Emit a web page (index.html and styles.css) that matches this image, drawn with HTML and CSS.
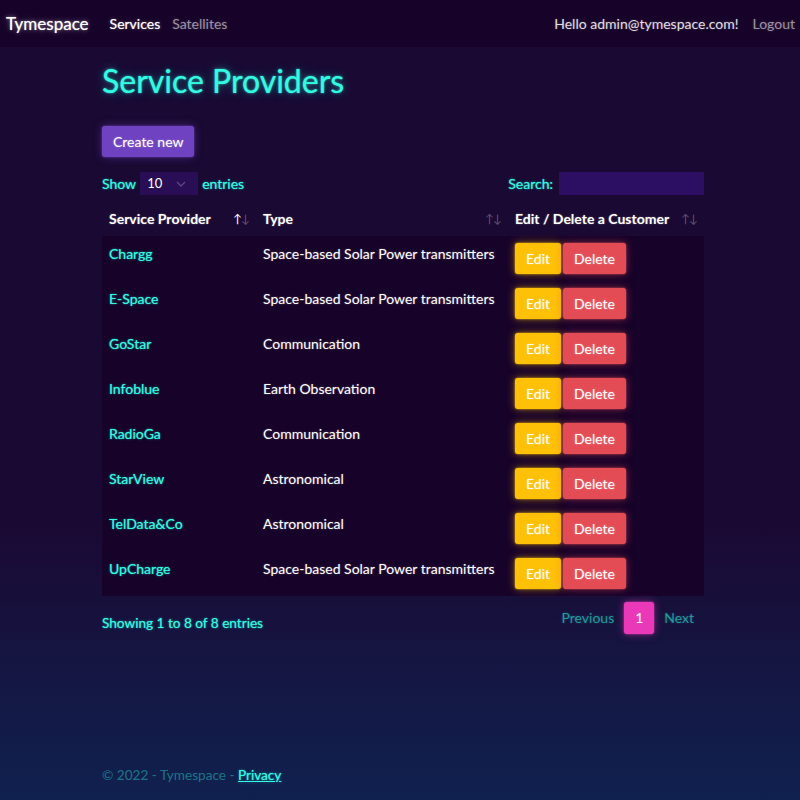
FILE: index.html
```html
<!DOCTYPE html>
<html lang="en">
<head>
<meta charset="utf-8">
<title>Service Providers - Tymespace</title>
<link rel="stylesheet" href="styles.css">
</head>
<body>
<header class="navbar">
  <div class="nav-left">
    <a class="brand" href="#">Tymespace</a>
    <a class="nav-link active" href="#">Services</a>
    <a class="nav-link" href="#">Satellites</a>
  </div>
  <div class="nav-right">
    <span class="hello">Hello admin@tymespace.com!</span>
    <a class="nav-link logout" href="#">Logout</a>
  </div>
</header>

<main class="container">
  <h1 class="title">Service Providers</h1>
  <div class="actions">
    <a class="btn btn-primary" href="#">Create new</a>
  </div>

  <div class="dt-top">
    <label class="dt-length">Show
      <span class="select"><span>10</span>
        <svg width="10" height="6" viewBox="0 0 10 6"><path d="M1 1l4 4 4-4" fill="none" stroke="#5a4a7e" stroke-width="1.3"/></svg>
      </span>
      entries</label>
    <label class="dt-search">Search: <span class="search-input"></span></label>
  </div>

  <table class="table">
    <thead>
      <tr>
        <th class="c1"><div class="th-in"><span>Service Provider</span><span class="sort"><span class="on">↑</span><span>↓</span></span></div></th>
        <th class="c2"><div class="th-in"><span>Type</span><span class="sort"><span>↑</span><span>↓</span></span></div></th>
        <th class="c3"><div class="th-in"><span>Edit / Delete a Customer</span><span class="sort"><span>↑</span><span>↓</span></span></div></th>
      </tr>
    </thead>
    <tbody>
      <tr><td class="name">Chargg</td><td class="type">Space-based Solar Power transmitters</td><td class="ops"><a class="btn btn-warning" href="#">Edit</a><a class="btn btn-danger" href="#">Delete</a></td></tr>
      <tr><td class="name">E-Space</td><td class="type">Space-based Solar Power transmitters</td><td class="ops"><a class="btn btn-warning" href="#">Edit</a><a class="btn btn-danger" href="#">Delete</a></td></tr>
      <tr><td class="name">GoStar</td><td class="type">Communication</td><td class="ops"><a class="btn btn-warning" href="#">Edit</a><a class="btn btn-danger" href="#">Delete</a></td></tr>
      <tr><td class="name">Infoblue</td><td class="type">Earth Observation</td><td class="ops"><a class="btn btn-warning" href="#">Edit</a><a class="btn btn-danger" href="#">Delete</a></td></tr>
      <tr><td class="name">RadioGa</td><td class="type">Communication</td><td class="ops"><a class="btn btn-warning" href="#">Edit</a><a class="btn btn-danger" href="#">Delete</a></td></tr>
      <tr><td class="name">StarView</td><td class="type">Astronomical</td><td class="ops"><a class="btn btn-warning" href="#">Edit</a><a class="btn btn-danger" href="#">Delete</a></td></tr>
      <tr><td class="name">TelData&amp;Co</td><td class="type">Astronomical</td><td class="ops"><a class="btn btn-warning" href="#">Edit</a><a class="btn btn-danger" href="#">Delete</a></td></tr>
      <tr><td class="name">UpCharge</td><td class="type">Space-based Solar Power transmitters</td><td class="ops"><a class="btn btn-warning" href="#">Edit</a><a class="btn btn-danger" href="#">Delete</a></td></tr>
    </tbody>
  </table>

  <div class="dt-bottom">
    <div class="dt-info">Showing 1 to 8 of 8 entries</div>
    <nav class="pagination">
      <a class="page-link disabled" href="#">Previous</a>
      <a class="page-link current" href="#">1</a>
      <a class="page-link disabled" href="#">Next</a>
    </nav>
  </div>
</main>

<footer class="footer">
  <div class="footer-in">© 2022 - Tymespace - <a href="#" class="privacy">Privacy</a></div>
</footer>
</body>
</html>
```

FILE: styles.css
```css
* { box-sizing: border-box; }

html, body { margin: 0; padding: 0; }

body {
  min-height: 800px;
  display: flex;
  flex-direction: column;
  font-family: Lato, "Open Sans", "DejaVu Sans", sans-serif;
  font-size: 14px;
  line-height: 1.5;
  color: #32fbe2;
  background-color: #1a0933;
  background-image: linear-gradient(to bottom, #1a0933 0px, #1a0933 520px, #10214f 800px);
}

a { text-decoration: none; color: inherit; }

.navbar {
  height: 47px;
  background: #170229;
  display: flex;
  align-items: center;
  justify-content: space-between;
  padding: 0 5px 0 6px;
}

.nav-left, .nav-right {
  display: flex;
  align-items: center;
}

.brand {
  font-size: 17px;
  color: #fff;
  margin-right: 21px;
  text-shadow: 0 0 1px rgba(255,255,255,.6), 0 0 4px rgba(255,255,255,.4), 0 0 10px rgba(255,255,255,.25);
}

.nav-link {
  font-size: 14px;
  color: rgba(255,255,255,.55);
  margin-right: 12px;
  text-shadow: 0 0 3px rgba(255,255,255,.2);
}

.nav-link.active {
  color: #fff;
  text-shadow: 0 0 1px rgba(255,255,255,.6), 0 0 4px rgba(255,255,255,.3);
}

.hello {
  font-size: 14px;
  color: rgba(255,255,255,.85);
  margin-right: 14px;
  text-shadow: 0 0 2px rgba(255,255,255,.3);
}

.logout { margin-right: 0; }

.container {
  width: 602px;
  margin-left: 102px;
  padding-top: 14px;
  flex: 1;
}

.title {
  margin: 0 0 25px;
  height: 40px;
  font-size: 32px;
  font-weight: 400;
  line-height: 40px;
  color: #32fbe2;
  text-shadow: 0 0 1px rgba(50,251,226,.6), 0 0 3px rgba(50,251,226,.5), 0 0 8px rgba(50,251,226,.3), 0 0 20px rgba(50,251,226,.2);
}

.btn {
  display: inline-block;
  height: 31px;
  line-height: 31px;
  padding: 0 11px;
  font-size: 14px;
  color: #fff;
  border-radius: 3px;
  text-shadow: 0 0 2px rgba(255,255,255,.4);
}

.btn-primary {
  background: #6f42c1;
  box-shadow: 0 0 2px rgba(111,66,193,.9), 0 0 8px rgba(111,66,193,.5);
}

.actions { height: 31px; margin-bottom: 15px; }

.dt-top {
  height: 23px;
  display: flex;
  justify-content: space-between;
  align-items: center;
  margin-bottom: 10px;
  text-shadow: 0 0 1px rgba(50,251,226,.6), 0 0 3px rgba(50,251,226,.4);
}

.dt-length, .dt-search {
  display: flex;
  align-items: center;
  height: 23px;
}

.select {
  display: inline-flex;
  align-items: center;
  justify-content: space-between;
  width: 58px;
  height: 23px;
  margin: 0 4px 0 4px;
  padding: 0 12px 0 7px;
  background: #2a0e55;
  color: #fff;
  text-shadow: none;
  font-size: 13px;
}

.search-input {
  display: inline-block;
  width: 145px;
  height: 23px;
  margin-left: 6px;
  background: #2c0f62;
}

.table {
  width: 602px;
  border-collapse: collapse;
  table-layout: fixed;
}

.c1 { width: 154px; }
.c2 { width: 252px; }
.c3 { width: 196px; }

th {
  height: 31px;
  padding: 0 7px 4px;
  text-align: left;
  color: #fff;
  font-weight: 700;
  font-size: 14px;
  text-shadow: 0 0 2px rgba(255,255,255,.35);
}

.th-in {
  display: flex;
  justify-content: space-between;
  align-items: center;
}

.sort {
  display: flex;
  font-size: 12px;
  font-weight: 400;
  letter-spacing: -1px;
  color: rgba(255,255,255,.3);
  text-shadow: none;
}

.sort .on { color: #fff; }

tbody tr {
  height: 45px;
  background: #170229;
}

td {
  padding: 7px 7px 0;
  vertical-align: top;
  height: 45px;
}

td.name {
  color: #32fbe2;
  text-shadow: 0 0 1px rgba(50,251,226,.6), 0 0 3px rgba(50,251,226,.4);
}

td.type {
  color: #fff;
  text-shadow: 0 0 2px rgba(255,255,255,.35);
  white-space: nowrap;
}

td.ops {
  display: flex;
  gap: 2px;
}

.btn-warning {
  background: #ffc107;
  box-shadow: 0 0 2px rgba(255,193,7,.9), 0 0 8px rgba(255,193,7,.5);
  padding: 0 11px;
}

.btn-danger {
  background: #e44c55;
  box-shadow: 0 0 2px rgba(228,76,85,.9), 0 0 8px rgba(228,76,85,.5);
  padding: 0 11px;
}

.dt-bottom {
  display: flex;
  justify-content: space-between;
  align-items: flex-start;
  padding-top: 6px;
}

.dt-info {
  padding-top: 11px;
  font-size: 13.6px;
  text-shadow: 0 0 1px rgba(50,251,226,.6), 0 0 3px rgba(50,251,226,.4);
}

.pagination {
  display: flex;
  align-items: center;
}

.page-link {
  height: 32px;
  line-height: 32px;
  padding: 0 10px;
  color: #32fbe2;
}

.page-link.disabled {
  color: rgba(50,251,226,.55);
  text-shadow: 0 0 3px rgba(50,251,226,.25);
}

.page-link.current {
  width: 30px;
  padding: 0;
  text-align: center;
  background: #ea39b8;
  color: #fff;
  border-radius: 3px;
  box-shadow: 0 0 2px rgba(234,57,184,.9), 0 0 8px rgba(234,57,184,.5);
}

.footer {
  height: 50px;
  line-height: 50px;
  padding-left: 102px;
  font-size: 13.6px;
  color: rgba(50,251,226,.4);
}

.privacy {
  color: #32fbe2;
  text-decoration: underline;
  text-shadow: 0 0 1px rgba(50,251,226,.6), 0 0 3px rgba(50,251,226,.4);
}
```
